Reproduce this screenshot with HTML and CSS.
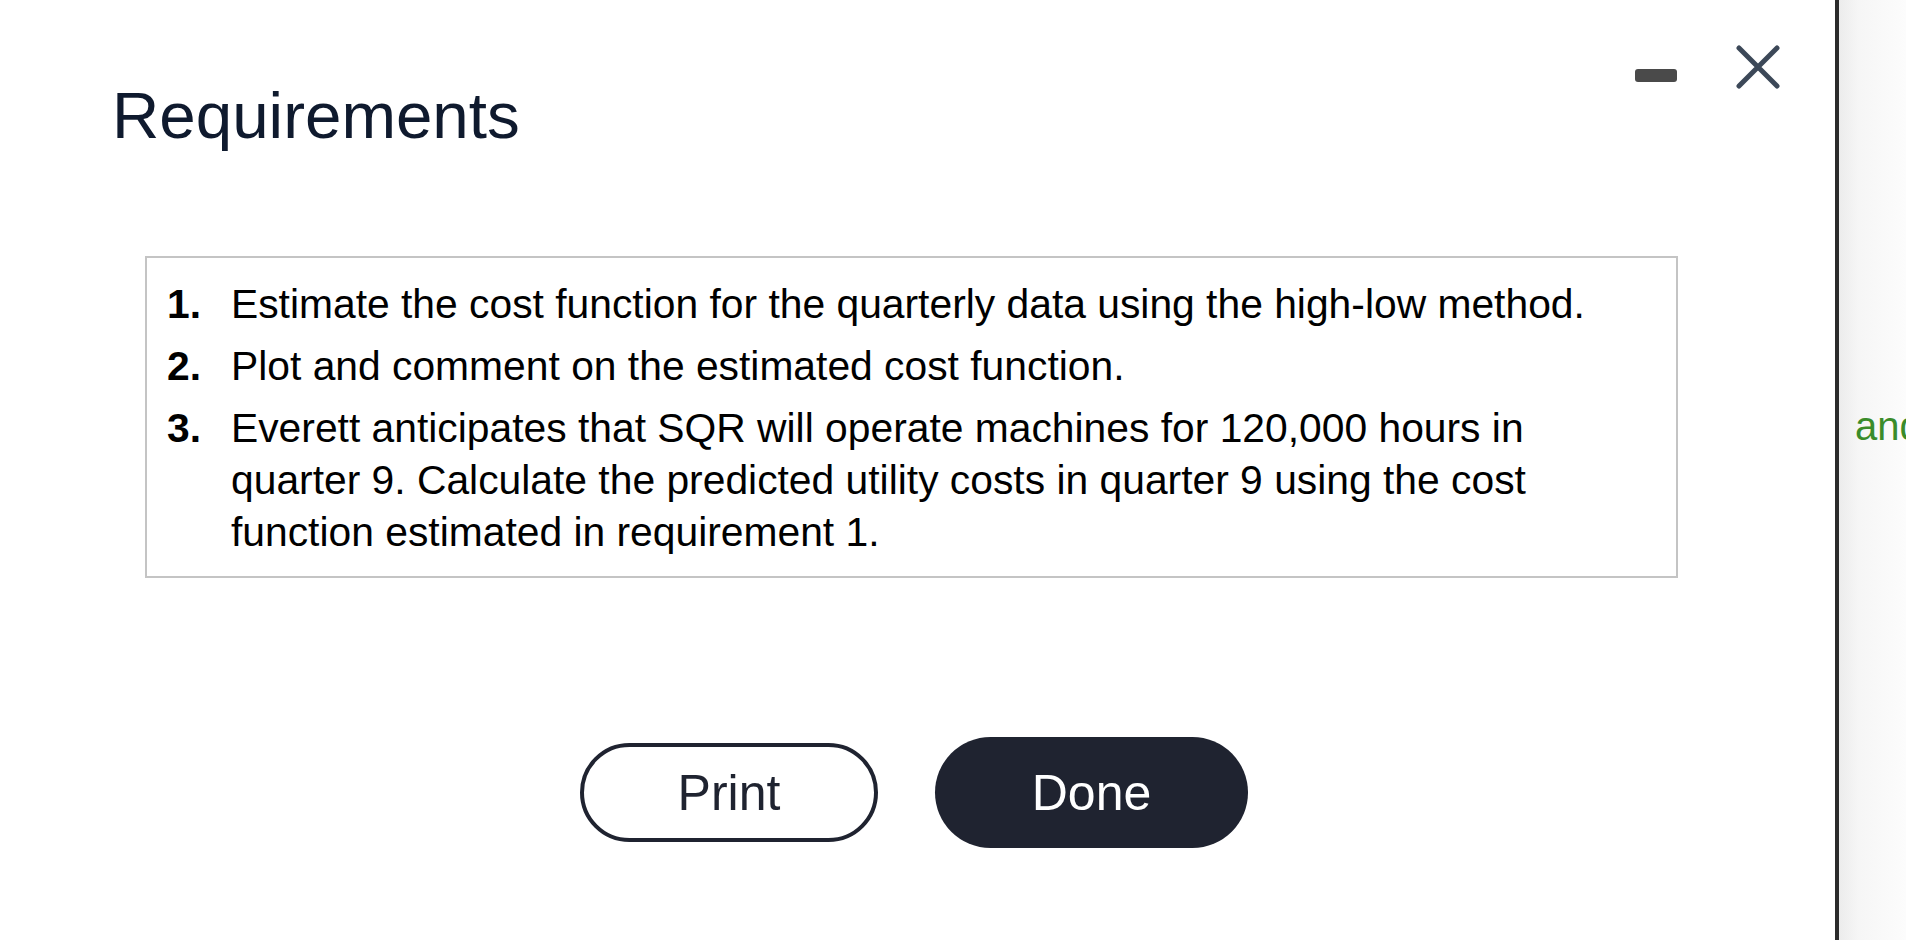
FILE: index.html
```html
<!DOCTYPE html>
<html lang="en">
<head>
<meta charset="utf-8">
<title>Requirements</title>
<link rel="stylesheet" href="styles.css">
</head>
<body>
<div class="page">
  <section class="modal">
    <header class="header">
      <h1 class="title">Requirements</h1>
      <div class="controls">
        <span class="minimize" aria-label="Minimize"></span>
        <svg class="close" width="44" height="44" viewBox="0 0 44 44" aria-label="Close">
          <path d="M3 3 L41 41 M41 3 L3 41" stroke="#3c4858" stroke-width="5" stroke-linecap="round" fill="none"/>
        </svg>
      </div>
    </header>
    <div class="box">
      <ol class="reqs">
        <li class="req"><span class="num">1.</span><span class="text">Estimate the cost function for the quarterly data using the high-low method.</span></li>
        <li class="req"><span class="num">2.</span><span class="text">Plot and comment on the estimated cost function.</span></li>
        <li class="req"><span class="num">3.</span><span class="text">Everett anticipates that SQR will operate machines for 120,000 hours in quarter 9. Calculate the predicted utility costs in quarter 9 using the cost function estimated in requirement 1.</span></li>
      </ol>
    </div>
    <div class="actions">
      <button class="btn btn-outline">Print</button>
      <button class="btn btn-solid">Done</button>
    </div>
  </section>
  <div class="divider"></div>
  <aside class="side">
    <span class="side-text">and</span>
  </aside>
</div>
</body>
</html>
```
FILE: styles.css
```css
html, body {
  margin: 0;
  padding: 0;
  background: #ffffff;
}

body {
  font-family: "Liberation Sans", Arial, Helvetica, sans-serif;
  width: 1906px;
  height: 940px;
  overflow: hidden;
}

.page {
  display: flex;
  height: 940px;
}

.modal {
  width: 1835px;
  flex: none;
  background: #ffffff;
}

.header {
  display: flex;
  justify-content: space-between;
  align-items: flex-start;
  padding: 45px 55px 0 112px;
}

.title {
  margin: 39px 0 0 0;
  font-size: 65.5px;
  line-height: 64px;
  font-weight: 400;
  color: #0f1a2e;
}

.controls {
  display: flex;
  align-items: flex-start;
  gap: 59px;
}

.minimize {
  display: block;
  width: 42px;
  height: 13px;
  margin-top: 24px;
  border-radius: 3px;
  background: #4a4a4a;
}

.close {
  display: block;
  width: 44px;
  height: 44px;
}

.box {
  margin: 108px 0 0 145px;
  width: 1533px;
  box-sizing: border-box;
  border: 2px solid #c4c4c4;
  padding: 20px 50px 18px 20px;
}

.reqs {
  list-style: none;
  margin: 0;
  padding: 0;
  display: flex;
  flex-direction: column;
  gap: 10px;
}

.req {
  display: grid;
  grid-template-columns: 64px 1fr;
  font-size: 40.8px;
  line-height: 52px;
  color: #000000;
}

.num {
  font-weight: 700;
}

.actions {
  display: flex;
  justify-content: center;
  align-items: center;
  gap: 57px;
  margin: 159px 0 0 145px;
  width: 1533px;
  padding-left: 5px;
  box-sizing: border-box;
}

.btn {
  font-family: "Liberation Sans", Arial, Helvetica, sans-serif;
  font-size: 50px;
  line-height: 1;
  box-sizing: border-box;
  display: flex;
  align-items: center;
  justify-content: center;
  padding: 0;
  cursor: pointer;
}

.btn-outline {
  width: 298px;
  height: 99px;
  border: 4px solid #1f2330;
  border-radius: 50px;
  background: #ffffff;
  color: #1f2330;
}

.btn-solid {
  width: 313px;
  height: 111px;
  border: none;
  border-radius: 56px;
  background: #1f2330;
  color: #ffffff;
}

.divider {
  width: 4px;
  flex: none;
  background: #2b2b2b;
}

.side {
  flex: 1;
  background: linear-gradient(to right, #ececec 0%, #f6f6f6 30%, #fcfcfc 100%);
  padding: 400px 0 0 16px;
  overflow: hidden;
  white-space: nowrap;
}

.side-text {
  font-size: 40px;
  line-height: 52px;
  color: #3a8c2a;
}
```
